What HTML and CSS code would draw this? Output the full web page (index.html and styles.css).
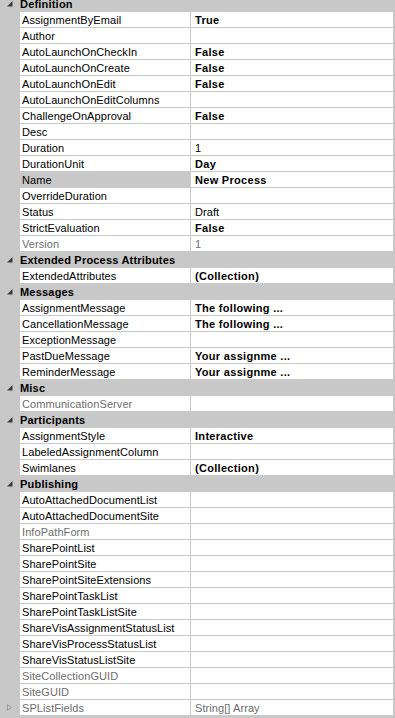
FILE: index.html
```html
<!DOCTYPE html>
<html lang="en">
<head>
  <meta charset="UTF-8">
  <meta name="viewport" content="width=device-width, initial-scale=1.0">
  <title>Process Properties</title>
  <link rel="stylesheet" href="styles.css">
</head>
<body>
  <div class="grid">
    <!-- Definition -->
    <div class="cat"><span class="toggle"><svg width="20" height="15" viewBox="0 0 20 15"><polygon points="12.5,5 12.5,10.5 7,10.5" fill="#3c3c3c"/></svg></span>Definition</div>
    <div class="row"><span class="name">AssignmentByEmail</span><span class="value bold">True</span></div>
    <div class="row"><span class="name">Author</span><span class="value"></span></div>
    <div class="row"><span class="name">AutoLaunchOnCheckIn</span><span class="value bold">False</span></div>
    <div class="row"><span class="name">AutoLaunchOnCreate</span><span class="value bold">False</span></div>
    <div class="row"><span class="name">AutoLaunchOnEdit</span><span class="value bold">False</span></div>
    <div class="row"><span class="name">AutoLaunchOnEditColumns</span><span class="value"></span></div>
    <div class="row"><span class="name">ChallengeOnApproval</span><span class="value bold">False</span></div>
    <div class="row"><span class="name">Desc</span><span class="value"></span></div>
    <div class="row"><span class="name">Duration</span><span class="value">1</span></div>
    <div class="row"><span class="name">DurationUnit</span><span class="value bold">Day</span></div>
    <div class="row selected"><span class="name">Name</span><span class="value bold">New Process</span></div>
    <div class="row"><span class="name">OverrideDuration</span><span class="value"></span></div>
    <div class="row"><span class="name">Status</span><span class="value">Draft</span></div>
    <div class="row"><span class="name">StrictEvaluation</span><span class="value bold">False</span></div>
    <div class="row readonly"><span class="name">Version</span><span class="value">1</span></div>

    <!-- Extended Process Attributes -->
    <div class="cat"><span class="toggle"><svg width="20" height="15" viewBox="0 0 20 15"><polygon points="12.5,5 12.5,10.5 7,10.5" fill="#3c3c3c"/></svg></span>Extended Process Attributes</div>
    <div class="row"><span class="name">ExtendedAttributes</span><span class="value bold">(Collection)</span></div>

    <!-- Messages -->
    <div class="cat"><span class="toggle"><svg width="20" height="15" viewBox="0 0 20 15"><polygon points="12.5,5 12.5,10.5 7,10.5" fill="#3c3c3c"/></svg></span>Messages</div>
    <div class="row"><span class="name">AssignmentMessage</span><span class="value bold">The following ...</span></div>
    <div class="row"><span class="name">CancellationMessage</span><span class="value bold">The following ...</span></div>
    <div class="row"><span class="name">ExceptionMessage</span><span class="value"></span></div>
    <div class="row"><span class="name">PastDueMessage</span><span class="value bold">Your assignme ...</span></div>
    <div class="row"><span class="name">ReminderMessage</span><span class="value bold">Your assignme ...</span></div>

    <!-- Misc -->
    <div class="cat"><span class="toggle"><svg width="20" height="15" viewBox="0 0 20 15"><polygon points="12.5,5 12.5,10.5 7,10.5" fill="#3c3c3c"/></svg></span>Misc</div>
    <div class="row readonly"><span class="name">CommunicationServer</span><span class="value"></span></div>

    <!-- Participants -->
    <div class="cat"><span class="toggle"><svg width="20" height="15" viewBox="0 0 20 15"><polygon points="12.5,5 12.5,10.5 7,10.5" fill="#3c3c3c"/></svg></span>Participants</div>
    <div class="row"><span class="name">AssignmentStyle</span><span class="value bold">Interactive</span></div>
    <div class="row"><span class="name">LabeledAssignmentColumn</span><span class="value"></span></div>
    <div class="row"><span class="name">Swimlanes</span><span class="value bold">(Collection)</span></div>

    <!-- Publishing -->
    <div class="cat"><span class="toggle"><svg width="20" height="15" viewBox="0 0 20 15"><polygon points="12.5,5 12.5,10.5 7,10.5" fill="#3c3c3c"/></svg></span>Publishing</div>
    <div class="row"><span class="name">AutoAttachedDocumentList</span><span class="value"></span></div>
    <div class="row"><span class="name">AutoAttachedDocumentSite</span><span class="value"></span></div>
    <div class="row readonly"><span class="name">InfoPathForm</span><span class="value"></span></div>
    <div class="row"><span class="name">SharePointList</span><span class="value"></span></div>
    <div class="row"><span class="name">SharePointSite</span><span class="value"></span></div>
    <div class="row"><span class="name">SharePointSiteExtensions</span><span class="value"></span></div>
    <div class="row"><span class="name">SharePointTaskList</span><span class="value"></span></div>
    <div class="row"><span class="name">SharePointTaskListSite</span><span class="value"></span></div>
    <div class="row"><span class="name">ShareVisAssignmentStatusList</span><span class="value"></span></div>
    <div class="row"><span class="name">ShareVisProcessStatusList</span><span class="value"></span></div>
    <div class="row"><span class="name">ShareVisStatusListSite</span><span class="value"></span></div>
    <div class="row readonly"><span class="name">SiteCollectionGUID</span><span class="value"></span></div>
    <div class="row readonly"><span class="name">SiteGUID</span><span class="value"></span></div>
    <div class="row readonly expandable"><span class="toggle"><svg width="20" height="15" viewBox="0 0 20 15"><polygon points="7.5,4.5 11.5,7.5 7.5,10.5" fill="none" stroke="#9a9a9a"/></svg></span><span class="name">SPListFields</span><span class="value">String[] Array</span></div>
  </div>
</body>
</html>
```

FILE: styles.css
```css
body {
  margin: 0;
  font-family: "Liberation Sans", Arial, sans-serif;
  font-size: 11px;
  letter-spacing: 0.08px;
  color: #000000;
  background-color: #c8c8c8;
  overflow: hidden;
}
.grid {
  margin-top: -4px;
  padding-right: 2px;
}
.cat {
  display: flex;
  height: 15px;
  line-height: 16px;
  margin-bottom: 1px;
  padding-left: 2px;
  font-weight: bold;
  letter-spacing: 0.2px;
  white-space: nowrap;
}
.toggle {
  width: 20px;
  height: 15px;
  flex: none;
}
.cat .toggle {
  margin-left: -2px;
}
.toggle svg {
  display: block;
}
.row {
  display: flex;
  height: 15px;
  line-height: 16px;
  margin-bottom: 1px;
  padding-left: 20px;
}
.row.expandable {
  padding-left: 0;
}
.row .name {
  width: 168px;
  flex: none;
  padding-left: 2px;
  margin-right: 1px;
  background-color: #ffffff;
  white-space: nowrap;
  overflow: hidden;
}
.row .value {
  flex: 1;
  padding-left: 4px;
  background-color: #ffffff;
  white-space: nowrap;
  overflow: hidden;
}
.row .value.bold {
  font-weight: bold;
  letter-spacing: 0.3px;
}
.row.selected .name {
  background-color: #c8c8c8;
}
.row.readonly .name,
.row.readonly .value {
  color: #6d6d6d;
}
```
